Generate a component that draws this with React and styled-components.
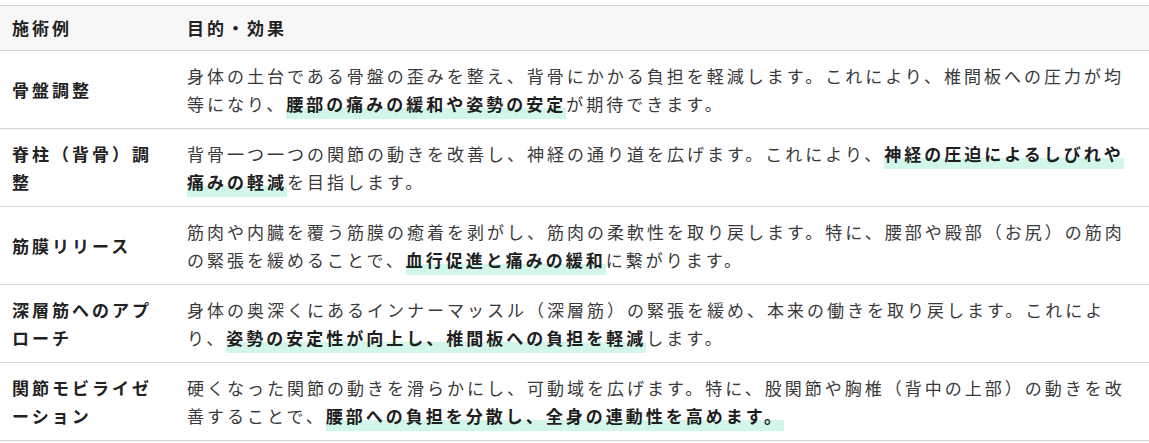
import React from "react";
import styled, { createGlobalStyle } from "styled-components";

const Global = createGlobalStyle`
  html, body { margin: 0; padding: 0; background: #fff; }
  body {
    font-family: "Noto Sans CJK JP", "Noto Sans", sans-serif;
    color: #333;
  }
`;

const Wrap = styled.div`
  padding-top: 5px;
`;

const Table = styled.div`
  width: 100%;
  font-size: 17px;
  line-height: 28px;
  letter-spacing: 3px;
  border-top: 1px solid #d4d4d4;
`;

const Row = styled.div`
  display: grid;
  grid-template-columns: 175px 1fr;
  align-items: center;
  border-bottom: 1px solid #d4d4d4;
  background: ${(p) => (p.$head ? "#f7f7f7" : "transparent")};
  min-height: ${(p) => (p.$head ? "44px" : "77px")};
`;

const HeadCell = styled.div`
  font-weight: 700;
  color: #222;
  padding: 8px 12px;
`;

const Name = styled.div`
  font-weight: 700;
  color: #222;
  padding: 10px 12px;
`;

const Desc = styled.div`
  padding: 10px 12px;
  color: #3a3a3a;
`;

const Mark = styled.strong`
  font-weight: 700;
  color: #1e1e1e;
  background: linear-gradient(transparent 62%, #d2f6ea 62%);
  padding-bottom: 3px;
`;

const rows = [
  {
    name: "骨盤調整",
    pre: "身体の土台である骨盤の歪みを整え、背骨にかかる負担を軽減します。これにより、椎間板への圧力が均等になり、",
    mark: "腰部の痛みの緩和や姿勢の安定",
    post: "が期待できます。",
  },
  {
    name: "脊柱（背骨）調整",
    pre: "背骨一つ一つの関節の動きを改善し、神経の通り道を広げます。これにより、",
    mark: "神経の圧迫によるしびれや痛みの軽減",
    post: "を目指します。",
  },
  {
    name: "筋膜リリース",
    pre: "筋肉や内臓を覆う筋膜の癒着を剥がし、筋肉の柔軟性を取り戻します。特に、腰部や殿部（お尻）の筋肉の緊張を緩めることで、",
    mark: "血行促進と痛みの緩和",
    post: "に繋がります。",
  },
  {
    name: "深層筋へのアプローチ",
    pre: "身体の奥深くにあるインナーマッスル（深層筋）の緊張を緩め、本来の働きを取り戻します。これにより、",
    mark: "姿勢の安定性が向上し、椎間板への負担を軽減",
    post: "します。",
  },
  {
    name: "関節モビライゼーション",
    pre: "硬くなった関節の動きを滑らかにし、可動域を広げます。特に、股関節や胸椎（背中の上部）の動きを改善することで、",
    mark: "腰部への負担を分散し、全身の連動性を高めます。",
    post: "",
  },
];

export default function App() {
  return (
    <>
      <Global />
      <Wrap>
        <Table>
          <Row $head>
            <HeadCell>施術例</HeadCell>
            <HeadCell>目的・効果</HeadCell>
          </Row>
          {rows.map((r) => (
            <Row key={r.name}>
              <Name>{r.name}</Name>
              <Desc>
                {r.pre}
                <Mark>{r.mark}</Mark>
                {r.post}
              </Desc>
            </Row>
          ))}
        </Table>
      </Wrap>
    </>
  );
}
